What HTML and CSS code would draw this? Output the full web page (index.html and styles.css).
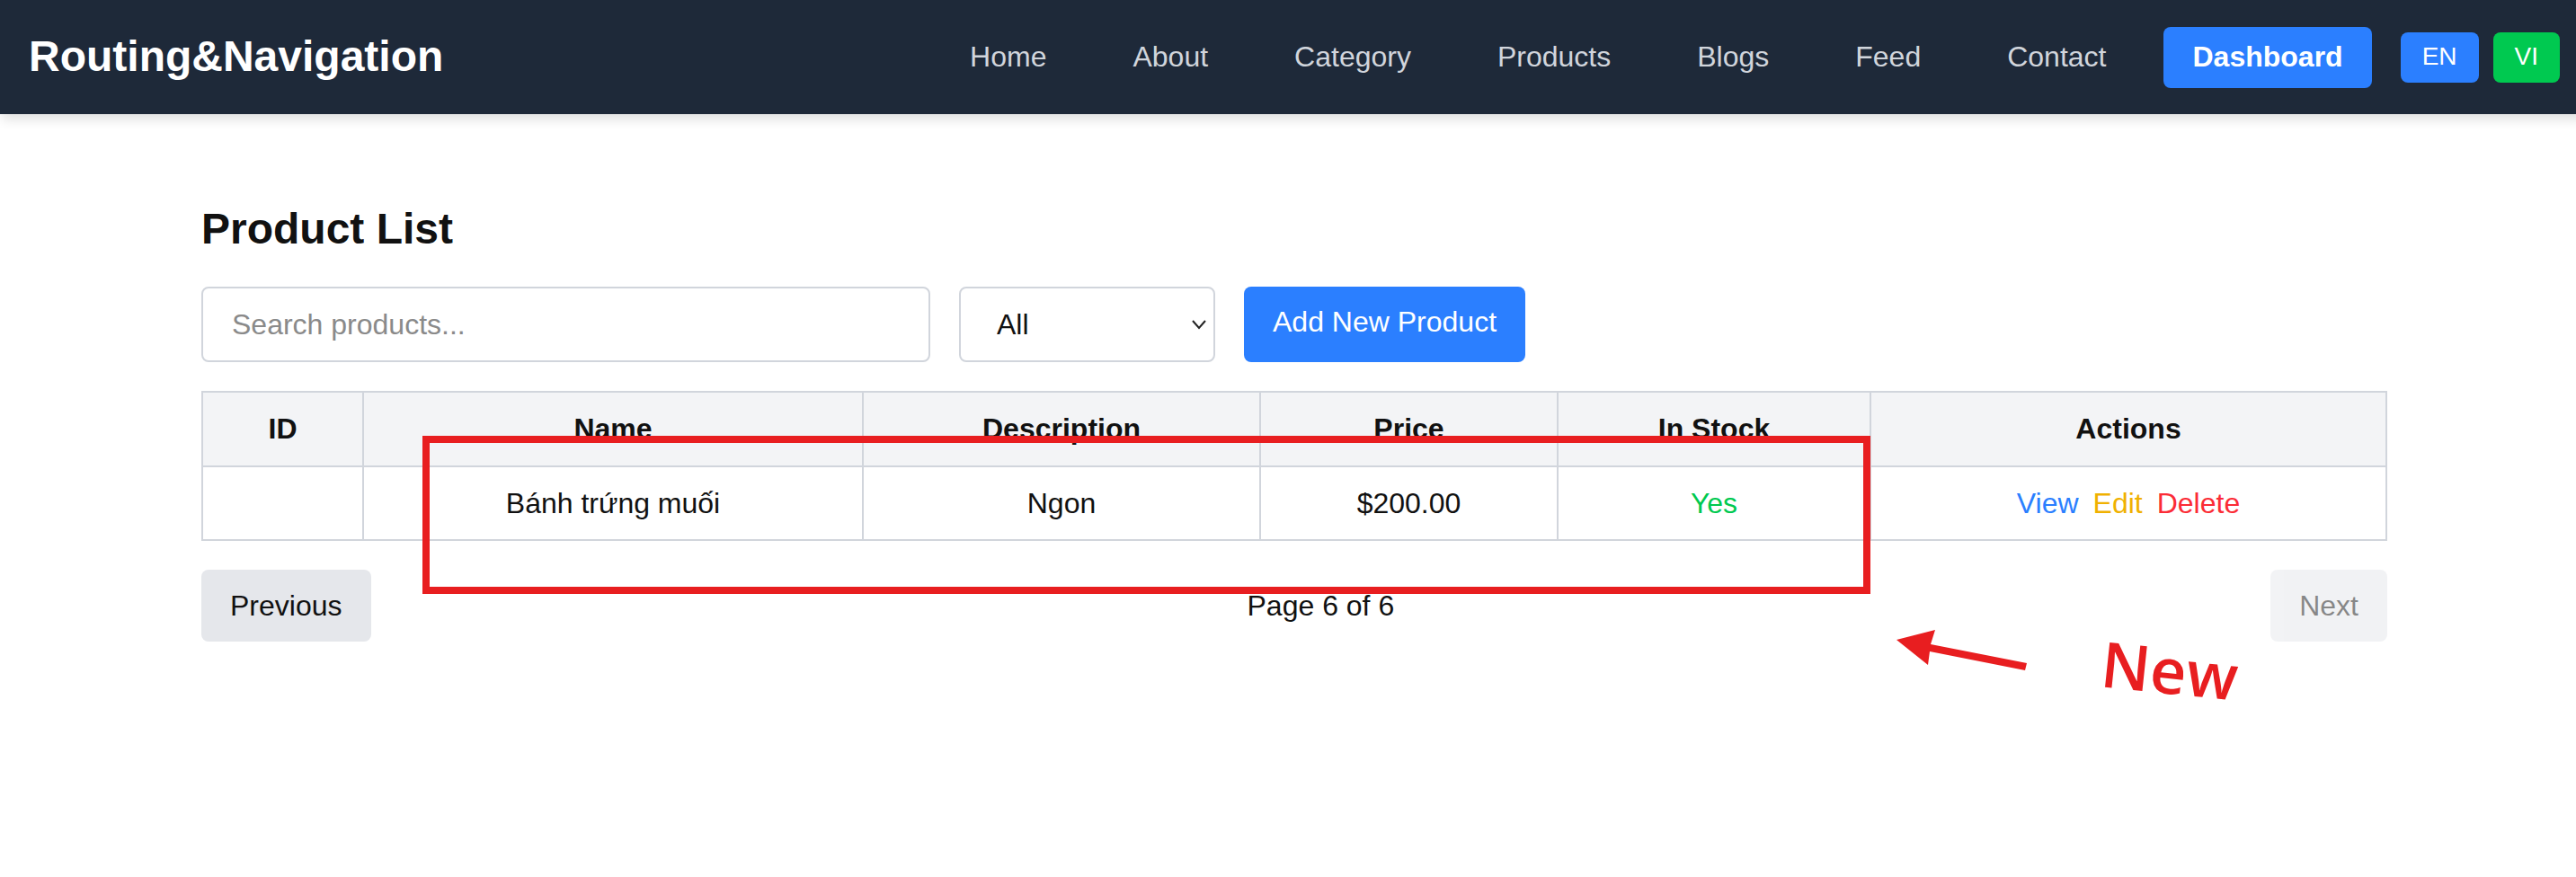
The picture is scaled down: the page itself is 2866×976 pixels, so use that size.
FILE: index.html
```html
<!DOCTYPE html>
<html lang="en">
<head>
  <meta charset="UTF-8">
  <meta name="viewport" content="width=device-width, initial-scale=1.0">
  <title>Routing&amp;Navigation</title>
  <link rel="stylesheet" href="styles.css">
</head>
<body>
  <div class="page">
    <nav class="navbar">
      <a class="brand" href="#">Routing&amp;Navigation</a>
      <div class="nav-right">
        <ul class="nav-links">
          <li><a href="#">Home</a></li>
          <li><a href="#">About</a></li>
          <li><a href="#">Category</a></li>
          <li><a href="#">Products</a></li>
          <li><a href="#">Blogs</a></li>
          <li><a href="#">Feed</a></li>
          <li><a href="#">Contact</a></li>
        </ul>
        <a class="dashboard-btn" href="#">Dashboard</a>
        <div class="lang">
          <button class="lang-btn lang-en">EN</button>
          <button class="lang-btn lang-vi">VI</button>
        </div>
      </div>
    </nav>

    <main class="container">
      <h1>Product List</h1>
      <div class="toolbar">
        <input class="search" type="text" placeholder="Search products...">
        <select class="filter">
          <option>All</option>
          <option>In Stock</option>
          <option>Out of Stock</option>
        </select>
        <button class="add-btn">Add New Product</button>
      </div>

      <table class="products">
        <thead>
          <tr>
            <th class="col-id">ID</th>
            <th class="col-name">Name</th>
            <th class="col-desc">Description</th>
            <th class="col-price">Price</th>
            <th class="col-stock">In Stock</th>
            <th>Actions</th>
          </tr>
        </thead>
        <tbody>
          <tr>
            <td></td>
            <td>Bánh trứng muối</td>
            <td>Ngon</td>
            <td>$200.00</td>
            <td class="yes">Yes</td>
            <td>
              <div class="actions">
                <a class="view" href="#">View</a>
                <a class="edit" href="#">Edit</a>
                <a class="delete" href="#">Delete</a>
              </div>
            </td>
          </tr>
        </tbody>
      </table>

      <div class="pagination">
        <button class="page-btn">Previous</button>
        <span>Page 6 of 6</span>
        <button class="page-btn" disabled>Next</button>
      </div>
    </main>

    <!-- annotation drawn over the screenshot -->
    <div class="mark-box"></div>
    <svg class="mark-arrow" width="160" height="60" viewBox="0 0 160 60">
      <polygon points="1,16 44,5 39,21 146,42 144,50 38,29 36,44" fill="#e81e20"/>
    </svg>
    <span class="mark-new">New</span>
  </div>
</body>
</html>
```

FILE: styles.css
```css
html, body {
  margin: 0;
  padding: 0;
  overflow: hidden;
  background: #fff;
}
body {
  font-family: "Liberation Sans", Arial, sans-serif;
  font-size: 32px;
  line-height: 48px;
  color: #111;
}
a {
  text-decoration: none;
  color: inherit;
}
button, input, select {
  font-family: inherit;
  font-size: 32px;
}
.page {
  position: relative;
  width: 2880px;
  height: 976px;
}

.navbar {
  display: flex;
  justify-content: space-between;
  align-items: center;
  height: 127px;
  padding: 0 32px;
  background: #1e2939;
  box-shadow: 0 8px 12px -2px rgba(0, 0, 0, 0.12);
}
.brand {
  padding-bottom: 2px;
  font-size: 48px;
  font-weight: bold;
  color: #fff;
}
.nav-right {
  display: flex;
  align-items: center;
}
.nav-links {
  display: flex;
  gap: 96px;
  list-style: none;
  margin: 0 64px 0 0;
  padding: 0 0 2px;
  color: #d1d5dc;
}
.dashboard-btn {
  height: 68px;
  padding: 0 32px;
  background: #2b7fff;
  border-radius: 8px;
  color: #fff;
  font-weight: bold;
  line-height: 66px;
}
.lang {
  display: flex;
  gap: 16px;
  margin-left: 32px;
}
.lang-btn {
  height: 56px;
  padding: 0 24px 2px;
  border: none;
  border-radius: 8px;
  color: #fff;
  font-size: 28px;
}
.lang-en {
  background: #2b7fff;
}
.lang-vi {
  background: #00c950;
}

.container {
  width: 2432px;
  margin: 0 auto;
  padding-top: 96px;
}
h1 {
  margin: 0 0 32px;
  font-size: 48px;
  line-height: 64px;
  font-weight: bold;
}
.toolbar {
  display: flex;
  gap: 32px;
  height: 84px;
  margin-bottom: 32px;
}
.search {
  box-sizing: border-box;
  width: 811px;
  padding: 0 32px;
  border: 2px solid #d1d5dc;
  border-radius: 8px;
}
.search::placeholder {
  color: #8a8a8a;
}
.filter {
  appearance: none;
  box-sizing: border-box;
  width: 285px;
  padding: 0 32px 0 40px;
  border: 2px solid #d1d5dc;
  border-radius: 8px;
  background: #fff url("data:image/svg+xml,%3Csvg xmlns='http://www.w3.org/2000/svg' width='18' height='12'%3E%3Cpath d='M2 2l7 8 7-8' fill='none' stroke='%23222' stroke-width='2'/%3E%3C/svg%3E") no-repeat right 7px center;
  color: #111;
}
.add-btn {
  padding: 0 32px 6px;
  border: none;
  border-radius: 8px;
  background: #2b7fff;
  color: #fff;
}

.products {
  width: 100%;
  table-layout: fixed;
  border-collapse: collapse;
  text-align: center;
}
.products th, .products td {
  box-sizing: border-box;
  border: 2px solid #d1d5dc;
}
.products th {
  height: 83px;
  padding: 0 16px 2px;
  background: #f3f4f6;
}
.products td {
  height: 82px;
  padding: 0 16px 1px;
}
.col-id {
  width: 179px;
}
.col-name {
  width: 556px;
}
.col-desc {
  width: 442px;
}
.col-price {
  width: 331px;
}
.col-stock {
  width: 348px;
}
.yes {
  color: #00c950;
}
.actions {
  display: flex;
  justify-content: center;
  gap: 16px;
}
.view {
  color: #2b7fff;
}
.edit {
  color: #f0b100;
}
.delete {
  color: #fb2c36;
}

.pagination {
  display: flex;
  justify-content: space-between;
  align-items: center;
  margin-top: 32px;
}
.page-btn {
  height: 80px;
  padding: 0 32px;
  border: none;
  border-radius: 8px;
  background: #e5e7eb;
  color: #111;
}
.page-btn:disabled {
  opacity: 0.5;
}

.mark-box {
  position: absolute;
  left: 470px;
  top: 485px;
  width: 1611px;
  height: 176px;
  box-sizing: border-box;
  border: 8px solid #e81e20;
}
.mark-arrow {
  position: absolute;
  left: 2109px;
  top: 696px;
}
.mark-new {
  position: absolute;
  left: 2338px;
  top: 703px;
  font-family: "Open Sans", sans-serif;
  font-size: 70px;
  line-height: 84px;
  font-weight: 600;
  color: #e81e20;
  transform: rotate(6deg);
}
```
